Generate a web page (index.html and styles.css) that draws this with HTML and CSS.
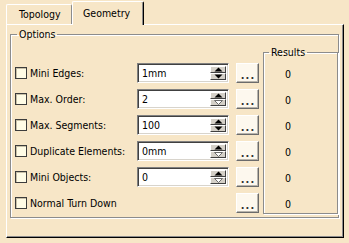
FILE: index.html
```html
<!DOCTYPE html>
<html lang="en">
<head>
    <meta charset="UTF-8">
    <title>Geometry</title>
    <link rel="stylesheet" href="styles.css">
</head>
<body>
    <div class="tabs">
        <div class="tab">Topology</div>
        <div class="tab active">Geometry</div>
    </div>

    <div class="panel">
        <fieldset class="group options">
            <legend>Options</legend>
            <div class="options-body">
                <div class="rows">
                    <div class="row">
                        <span class="check"></span>
                        <span class="label">Mini Edges:</span>
                        <div class="field">
                            <span class="value">1mm</span>
                            <div class="spin">
                                <span class="arrow"><svg width="9" height="5" viewBox="0 0 9 5"><polygon points="0.5,4.5 4.5,0.5 8.5,4.5" fill="#000"/></svg></span>
                                <span class="arrow"><svg width="9" height="5" viewBox="0 0 9 5"><polygon points="0.5,0.5 8.5,0.5 4.5,4.5" fill="#000"/></svg></span>
                            </div>
                        </div>
                        <button class="more">...</button>
                    </div>
                    <div class="row">
                        <span class="check"></span>
                        <span class="label">Max. Order:</span>
                        <div class="field">
                            <span class="value">2</span>
                            <div class="spin">
                                <span class="arrow"><svg width="9" height="5" viewBox="0 0 9 5"><polygon points="0.5,4.5 4.5,0.5 8.5,4.5" fill="#000"/></svg></span>
                                <span class="arrow"><svg width="9" height="5" viewBox="0 0 9 5"><polygon points="0.5,0.5 8.5,0.5 4.5,4.5" fill="#fff" stroke="#6b6b6b"/></svg></span>
                            </div>
                        </div>
                        <button class="more">...</button>
                    </div>
                    <div class="row">
                        <span class="check"></span>
                        <span class="label">Max. Segments:</span>
                        <div class="field">
                            <span class="value">100</span>
                            <div class="spin">
                                <span class="arrow"><svg width="9" height="5" viewBox="0 0 9 5"><polygon points="0.5,4.5 4.5,0.5 8.5,4.5" fill="#000"/></svg></span>
                                <span class="arrow"><svg width="9" height="5" viewBox="0 0 9 5"><polygon points="0.5,0.5 8.5,0.5 4.5,4.5" fill="#000"/></svg></span>
                            </div>
                        </div>
                        <button class="more">...</button>
                    </div>
                    <div class="row">
                        <span class="check"></span>
                        <span class="label">Duplicate Elements:</span>
                        <div class="field">
                            <span class="value">0mm</span>
                            <div class="spin">
                                <span class="arrow"><svg width="9" height="5" viewBox="0 0 9 5"><polygon points="0.5,4.5 4.5,0.5 8.5,4.5" fill="#000"/></svg></span>
                                <span class="arrow"><svg width="9" height="5" viewBox="0 0 9 5"><polygon points="0.5,0.5 8.5,0.5 4.5,4.5" fill="#fff" stroke="#6b6b6b"/></svg></span>
                            </div>
                        </div>
                        <button class="more">...</button>
                    </div>
                    <div class="row">
                        <span class="check"></span>
                        <span class="label">Mini Objects:</span>
                        <div class="field">
                            <span class="value">0</span>
                            <div class="spin">
                                <span class="arrow"><svg width="9" height="5" viewBox="0 0 9 5"><polygon points="0.5,4.5 4.5,0.5 8.5,4.5" fill="#000"/></svg></span>
                                <span class="arrow"><svg width="9" height="5" viewBox="0 0 9 5"><polygon points="0.5,0.5 8.5,0.5 4.5,4.5" fill="#fff" stroke="#6b6b6b"/></svg></span>
                            </div>
                        </div>
                        <button class="more">...</button>
                    </div>
                    <div class="row">
                        <span class="check"></span>
                        <span class="label wide">Normal Turn Down</span>
                        <button class="more">...</button>
                    </div>
                </div>

                <fieldset class="group results">
                    <legend>Results</legend>
                    <div class="result">0</div>
                    <div class="result">0</div>
                    <div class="result">0</div>
                    <div class="result">0</div>
                    <div class="result">0</div>
                    <div class="result">0</div>
                </fieldset>
            </div>
        </fieldset>
    </div>
</body>
</html>
```

FILE: styles.css
```css
* {
    box-sizing: border-box;
}

body {
    margin: 0;
    width: 349px;
    height: 243px;
    overflow: hidden;
    background-color: #f7e6c7;
    font-family: "DejaVu Sans Condensed", "Liberation Sans", Arial, sans-serif;
    font-size: 10.5px;
    color: #000;
}

.tabs {
    display: flex;
    align-items: flex-end;
    height: 24px;
    padding-left: 6px;
}

.tab {
    height: 20px;
    width: 66px;
    padding: 3px 0 0 12px;
    white-space: nowrap;
    border-top: 1px solid #fff;
    border-left: 1px solid #fff;
    border-right: 1px solid #8c8c8c;
    border-top-left-radius: 2px;
    border-top-right-radius: 2px;
}

.tab.active {
    width: 72px;
    height: 24px;
    margin-bottom: -1px;
    padding: 5px 0 0 10px;
    background-color: #f7e6c7;
    border-right: 1px solid #000;
    box-shadow: inset -1px 0 0 #8c8c8c;
    position: relative;
    z-index: 1;
}

.panel {
    width: 338px;
    height: 214px;
    margin-left: 6px;
    padding: 2px 3px 0 3px;
    border-top: 1px solid #fff;
    border-left: 1px solid #fff;
    border-right: 1px solid #000;
    border-bottom: 1px solid #000;
    box-shadow: inset -1px -1px 0 #8c8c8c;
}

.group {
    margin: 0;
    padding: 0;
    min-width: 0;
    border: 1px solid #8c8c8c;
    box-shadow: inset 1px 1px 0 #fff, 1px 1px 0 #fff;
}

.group legend {
    padding: 0 2px;
    margin-left: 6px;
    line-height: 14px;
}

.options {
    width: 329px;
    height: 191px;
}

.options-body {
    display: flex;
    padding-left: 4px;
}

.rows {
    display: flex;
    flex-direction: column;
    gap: 6px;
    padding-top: 22px;
    flex-shrink: 0;
}

.row {
    display: flex;
    align-items: center;
    height: 20px;
}

.check {
    flex-shrink: 0;
    width: 12px;
    height: 12px;
    margin-right: 3px;
    border: 1px solid #3c3c3c;
    background-color: #fffce6;
    box-shadow: inset 1px 1px 0 #c8c0a8;
}

.label {
    flex-shrink: 0;
    width: 107px;
    white-space: nowrap;
}

.label.wide {
    width: 199px;
}

.field {
    flex-shrink: 0;
    display: flex;
    width: 92px;
    height: 20px;
    border-top: 1px solid #808080;
    border-left: 1px solid #808080;
    border-right: 1px solid #fff;
    border-bottom: 1px solid #fff;
    box-shadow: inset 1px 1px 0 #404040, inset -1px -1px 0 #d8d4cc;
    background-color: #fff;
    padding: 2px;
}

.value {
    flex: 1;
    padding-left: 2px;
    line-height: 15px;
}

.spin {
    display: flex;
    flex-direction: column;
    width: 16px;
}

.arrow {
    flex: 1;
    display: flex;
    align-items: center;
    justify-content: center;
    background-color: #d4d0c8;
    border-top: 1px solid #fff;
    border-left: 1px solid #fff;
    border-right: 1px solid #404040;
    border-bottom: 1px solid #404040;
}

.arrow svg {
    display: block;
}

.more {
    flex-shrink: 0;
    width: 23px;
    height: 20px;
    margin-left: 7px;
    padding: 0 0 3px 1px;
    display: flex;
    align-items: flex-end;
    justify-content: center;
    font-family: inherit;
    font-size: 11px;
    font-weight: bold;
    letter-spacing: 1px;
    line-height: 6px;
    color: #333;
    background-color: #fdf8ee;
    border: none;
    border-top: 1px solid #fff;
    border-left: 1px solid #fff;
    border-right: 1px solid #6b6b6b;
    border-bottom: 1px solid #6b6b6b;
    box-shadow: inset -1px -1px 0 #b8b4ac;
}

.results {
    width: 75px;
    height: 169px;
    margin: 4px 0 0 4px;
    padding: 5px 0 0 0;
}

.results legend {
    margin-left: 5px;
}

.result {
    height: 20px;
    margin-bottom: 6px;
    padding-left: 21px;
    line-height: 20px;
}
```
